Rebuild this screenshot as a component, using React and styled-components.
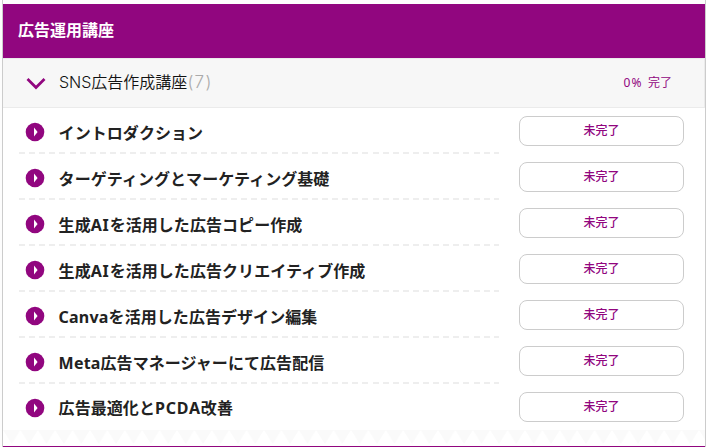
import styled, { createGlobalStyle } from 'styled-components';

const GlobalStyle = createGlobalStyle`
  * {
    box-sizing: border-box;
  }

  body {
    margin: 0;
    height: 447px;
    overflow: hidden;
    background: #fdfdfd;
    font-family: 'Noto Sans', 'Noto Sans CJK JP', sans-serif;
    color: #222;
  }
`;

const Page = styled.div`
  height: 447px;
  padding-left: 2px;
`;

const Panel = styled.section`
  width: 704px;
  height: 447px;
  border: solid #ccc;
  border-width: 0 1px;
  display: flex;
  flex-direction: column;
  background: #fff;
`;

const Spacer = styled.div`
  flex: 0 0 4px;
  background: #fdfdfd;
`;

const Title = styled.h2`
  flex: 0 0 54px;
  margin: 0;
  padding: 0 15px 4px;
  display: flex;
  align-items: center;
  background: #91067f;
  color: #fff;
  font-size: 16px;
  font-weight: 700;
`;

const Section = styled.div`
  flex: 0 0 50px;
  padding: 0 32px 0 23px;
  display: flex;
  align-items: center;
  background: #f7f7f7;
  border: 1px solid #ebebeb;
  border-left: 0;
`;

const Chevron = styled.svg`
  width: 20px;
  height: 13px;
  flex: none;
`;

const SectionName = styled.div`
  flex: 1;
  margin-left: 13px;
  padding-bottom: 3px;
  color: #111;
  font-family: Inter, 'Noto Sans CJK JP', sans-serif;
  font-size: 16px;
  font-weight: 350;
  line-height: 24px;
`;

const Count = styled.span`
  color: #aaa;
  font-size: 17px;
  letter-spacing: 1.3px;
`;

const Progress = styled.div`
  color: #91067f;
  font-size: 12px;
  line-height: 20px;
`;

const Percent = styled.span`
  margin-right: 2px;
  letter-spacing: 1.3px;
`;

const List = styled.ul`
  margin: 0;
  padding: 0 20px 0 16px;
  list-style: none;
  flex: 0 0 322px;
`;

const Row = styled.li`
  height: 46px;
  display: flex;
  gap: 20px;
`;

const Lesson = styled.div`
  width: 480px;
  height: 46px;
  padding: ${({ $last }) => $last ? '2px 0 0 6px' : '3px 0 0 6px'};
  display: flex;
  align-items: center;
  background: ${({ $last }) => $last
    ? 'none'
    : 'repeating-linear-gradient(90deg, #eee 0 6px, transparent 6px 10.1px) left bottom / 100% 2px no-repeat'};
`;

const Play = styled.svg`
  width: 20px;
  height: 20px;
  margin: 0 0 1px;
  flex: none;
`;

const LessonName = styled.span`
  margin-left: 13.6px;
  padding-bottom: ${({ $last }) => $last ? '1px' : 0};
  font-size: 16px;
  font-weight: 700;
  line-height: 24px;
  letter-spacing: 0.06px;
  white-space: nowrap;
`;

const Latin = styled.span`
  letter-spacing: ${({ $caps }) => $caps ? '0.8px' : '0.2px'};
`;

const Status = styled.button`
  width: 165px;
  height: 30px;
  margin: 8px 0 0;
  padding: 0;
  border: 1px solid #ccc;
  border-radius: 8px;
  background: #fff;
  color: #91067f;
  font: 500 12px/20px 'Noto Sans', 'Noto Sans CJK JP', sans-serif;
`;

const Zigzag = styled.svg`
  flex: none;
  width: 702px;
  height: 16px;
  display: block;
`;

const BottomLine = styled.div`
  flex: 0 0 1px;
  background: #91067f;
`;

const lessons = [
  'イントロダクション',
  'ターゲティングとマーケティング基礎',
  '生成AIを活用した広告コピー作成',
  '生成AIを活用した広告クリエイティブ作成',
  'Canvaを活用した広告デザイン編集',
  'Meta広告マネージャーにて広告配信',
  '広告最適化とPCDA改善',
];

// Latin words inside Japanese names get their own tracking.
function renderName(name) {
  return name.split(/([A-Za-z]+)/).map((part, index) =>
    index % 2 === 1 ? (
      <Latin key={index} $caps={part === part.toUpperCase()}>{part}</Latin>
    ) : (
      part
    )
  );
}

export default function App() {
  return (
    <Page lang="ja">
      <GlobalStyle />
      <Panel>
        <Spacer />
        <Title>広告運用講座</Title>
        <Section>
          <Chevron viewBox="0 0 20 13">
            <path d="M1.5 2L10 10.5L18.5 2" fill="none" stroke="#91067f" strokeWidth="2.7" />
          </Chevron>
          <SectionName>
            SNS広告作成講座<Count>(7)</Count>
          </SectionName>
          <Progress>
            <Percent>0%</Percent> 完了
          </Progress>
        </Section>
        <List>
          {lessons.map((lesson, index) => (
            <Row key={lesson}>
              <Lesson $last={index === lessons.length - 1}>
                <Play viewBox="0 0 20 20">
                  <circle cx="10" cy="10" r="9.3" fill="#91067f" />
                  <path d="M9 5.5L12.6 10L9 14.5Z" fill="#fff" />
                </Play>
                <LessonName $last={index === lessons.length - 1}>{renderName(lesson)}</LessonName>
              </Lesson>
              <Status type="button">未完了</Status>
            </Row>
          ))}
        </List>
        <Zigzag>
          <defs>
            <pattern id="teeth" width="17.4" height="16" patternUnits="userSpaceOnUse">
              <path d="M0 0H17.4L8.7 14Z" fill="#fafafa" />
            </pattern>
          </defs>
          <rect width="702" height="16" fill="url(#teeth)" />
        </Zigzag>
        <BottomLine />
      </Panel>
    </Page>
  );
}
